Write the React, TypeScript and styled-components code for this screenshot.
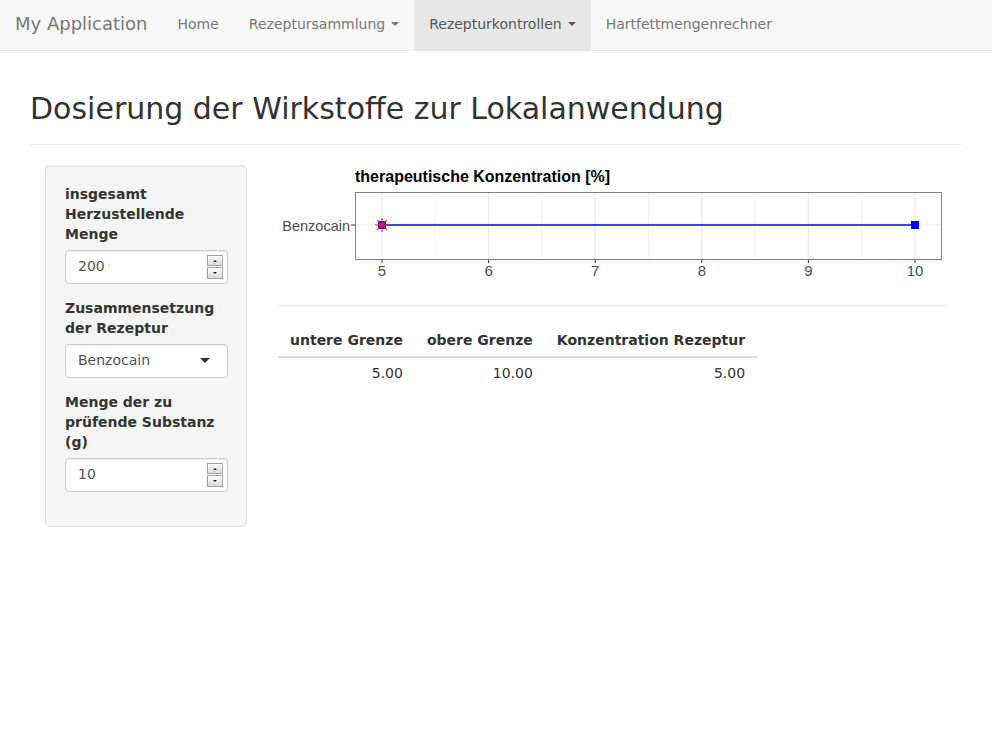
import React from "react";
import styled, { createGlobalStyle } from "styled-components";

const Global = createGlobalStyle`
  html, body { margin: 0; padding: 0; background: #fff; }
  body {
    font-family: "DejaVu Sans", "Liberation Sans", sans-serif;
    font-size: 14px;
    line-height: 1.42857;
    color: #333;
  }
  * { box-sizing: border-box; }
`;

const Navbar = styled.nav`
  display: flex;
  align-items: stretch;
  height: 51px;
  background: #f8f8f8;
  border-bottom: 1px solid #e7e7e7;
`;

const Brand = styled.a`
  padding: 14px 15px 16px;
  font-size: 18px;
  line-height: 20px;
  color: #777;
  text-decoration: none;
`;

const NavLink = styled.a<{ $active?: boolean }>`
  display: flex;
  align-items: center;
  padding: 14px 15px 16px;
  line-height: 20px;
  color: ${(p) => (p.$active ? "#555" : "#777")};
  background: ${(p) => (p.$active ? "#e7e7e7" : "transparent")};
  text-decoration: none;
`;

const Caret = styled.span`
  display: inline-block;
  width: 0;
  height: 0;
  margin-left: 6px;
  border-top: 4px solid currentColor;
  border-left: 4px solid transparent;
  border-right: 4px solid transparent;
`;

const Container = styled.div`
  padding: 0 30px;
`;

const PageHeader = styled.div`
  padding: 39px 0 17px;
  border-bottom: 1px solid #eee;
  margin-bottom: 20px;
`;

const Title = styled.h1`
  margin: 0;
  font-size: 30px;
  font-weight: 500;
  line-height: 37px;
  color: #333;
`;

const Row = styled.div`
  display: flex;
  align-items: flex-start;
  padding: 0 15px;
  gap: 31px;
`;

const Well = styled.div`
  width: 202px;
  flex: none;
  background: #f5f5f5;
  border: 1px solid #e3e3e3;
  border-radius: 4px;
  padding: 19px;
  box-shadow: inset 0 1px 1px rgba(0, 0, 0, 0.05);
`;

const FormGroup = styled.div`
  margin-bottom: 15px;
`;

const Label = styled.label`
  display: block;
  font-weight: 700;
  margin-bottom: 5px;
`;

const Field = styled.div`
  position: relative;
  height: 34px;
  width: 163px;
  background: #fff;
  border: 1px solid #ccc;
  border-radius: 4px;
  box-shadow: inset 0 1px 1px rgba(0, 0, 0, 0.075);
  padding: 5px 12px 7px;
  color: #555;
  line-height: 20px;
`;

const Spinner = styled.div`
  position: absolute;
  right: 4px;
  top: 4px;
  width: 16px;
  height: 24px;
  display: flex;
  flex-direction: column;
  gap: 1px;
`;

const SpinBtn = styled.div<{ $down?: boolean }>`
  flex: 1;
  border: 1px solid #a0a0a0;
  background: linear-gradient(#fafafa, #dcdcdc);
  display: flex;
  align-items: center;
  justify-content: center;
  &::after {
    content: "";
    width: 0;
    height: 0;
    border-left: 2px solid transparent;
    border-right: 2px solid transparent;
    ${(p) =>
      p.$down ? "border-top: 2px solid #222;" : "border-bottom: 2px solid #222;"}
  }
`;

const SelectCaret = styled.span`
  position: absolute;
  right: 17px;
  top: 13px;
  width: 0;
  height: 0;
  border-top: 5px solid #333;
  border-left: 5px solid transparent;
  border-right: 5px solid transparent;
`;

const Main = styled.div`
  flex: 1;
  min-width: 0;
`;

const PlotBox = styled.div`
  height: 120px;
`;

const Rule = styled.hr`
  margin: 20px 0;
  border: 0;
  border-top: 1px solid #eee;
`;

const Table = styled.table`
  border-collapse: collapse;
  margin-bottom: 20px;
`;

const Th = styled.th`
  font-weight: 700;
  text-align: right;
  padding: 4px 12px 6px;
  line-height: 20px;
  border-bottom: 2px solid #ddd;
  white-space: nowrap;
`;

const Td = styled.td`
  text-align: right;
  padding: 5px 12px;
  line-height: 20px;
`;

const NumberInput = ({ value }: { value: string }) => (
  <Field>
    {value}
    <Spinner>
      <SpinBtn />
      <SpinBtn $down />
    </Spinner>
  </Field>
);

const Chart = () => {
  const x0 = 104;
  const unit = 106.6;
  const xs = (v: number) => x0 + (v - 5) * unit;
  const majors = [5, 6, 7, 8, 9, 10];
  const minors = [5.5, 6.5, 7.5, 8.5, 9.5];
  const py = 60;
  const ax = "Liberation Sans, Arial, sans-serif";
  return (
    <svg width="669" height="120" viewBox="0 0 669 120">
      <text x="77" y="17" fontFamily={ax} fontWeight="700" fontSize="16" fill="#000">
        therapeutische Konzentration [%]
      </text>
      <rect x="77.5" y="27.5" width="586" height="67" fill="#fff" />
      {minors.map((m) => (
        <line key={m} x1={xs(m)} x2={xs(m)} y1="28" y2="94" stroke="#f3f3f3" strokeWidth="1" />
      ))}
      {majors.map((m) => (
        <line key={m} x1={xs(m)} x2={xs(m)} y1="28" y2="94" stroke="#ebebeb" strokeWidth="1.2" />
      ))}
      <line x1="78" x2="663" y1={py} y2={py} stroke="#ebebeb" strokeWidth="1.2" />
      <line x1={xs(5)} x2={xs(10)} y1={py} y2={py} stroke="#0000ff" strokeWidth="1.3" />
      <rect x={xs(5) - 4} y={py - 4} width="8" height="8" fill="#0000ff" />
      <rect x={xs(10) - 4} y={py - 4} width="8" height="8" fill="#0000ff" />
      <g stroke="#ff2a2a" strokeOpacity="0.75" strokeWidth="1.5">
        <line x1={xs(5) - 7} x2={xs(5) + 7} y1={py} y2={py} />
        <line x1={xs(5)} x2={xs(5)} y1={py - 7} y2={py + 7} />
        <line x1={xs(5) - 5} x2={xs(5) + 5} y1={py - 5} y2={py + 5} />
        <line x1={xs(5) - 5} x2={xs(5) + 5} y1={py + 5} y2={py - 5} />
      </g>
      <rect x="77.5" y="27.5" width="586" height="67" fill="none" stroke="#7f7f7f" strokeWidth="1" />
      <line x1="73" x2="77" y1={py} y2={py} stroke="#333" strokeWidth="1" />
      <text x="72" y={py + 6} textAnchor="end" fontFamily={ax} fontSize="14.5" fill="#4d4d4d">
        Benzocain
      </text>
      {majors.map((m) => (
        <g key={m}>
          <line x1={xs(m)} x2={xs(m)} y1="95" y2="98" stroke="#333" strokeWidth="1" />
          <text x={xs(m)} y="111" textAnchor="middle" fontFamily={ax} fontSize="15" fill="#4d4d4d">
            {m}
          </text>
        </g>
      ))}
    </svg>
  );
};

export default function App() {
  return (
    <>
      <Global />
      <Navbar>
        <Brand>My Application</Brand>
        <NavLink>Home</NavLink>
        <NavLink>
          Rezeptursammlung <Caret />
        </NavLink>
        <NavLink $active>
          Rezepturkontrollen <Caret />
        </NavLink>
        <NavLink>Hartfettmengenrechner</NavLink>
      </Navbar>
      <Container>
        <PageHeader>
          <Title>Dosierung der Wirkstoffe zur Lokalanwendung</Title>
        </PageHeader>
        <Row>
          <Well>
            <FormGroup>
              <Label>insgesamt Herzustellende Menge</Label>
              <NumberInput value="200" />
            </FormGroup>
            <FormGroup>
              <Label>Zusammensetzung der Rezeptur</Label>
              <Field>
                Benzocain
                <SelectCaret />
              </Field>
            </FormGroup>
            <FormGroup>
              <Label>Menge der zu prüfende Substanz (g)</Label>
              <NumberInput value="10" />
            </FormGroup>
          </Well>
          <Main>
            <PlotBox>
              <Chart />
            </PlotBox>
            <Rule />
            <Table>
              <thead>
                <tr>
                  <Th>untere Grenze</Th>
                  <Th>obere Grenze</Th>
                  <Th>Konzentration Rezeptur</Th>
                </tr>
              </thead>
              <tbody>
                <tr>
                  <Td>5.00</Td>
                  <Td>10.00</Td>
                  <Td>5.00</Td>
                </tr>
              </tbody>
            </Table>
          </Main>
        </Row>
      </Container>
    </>
  );
}
